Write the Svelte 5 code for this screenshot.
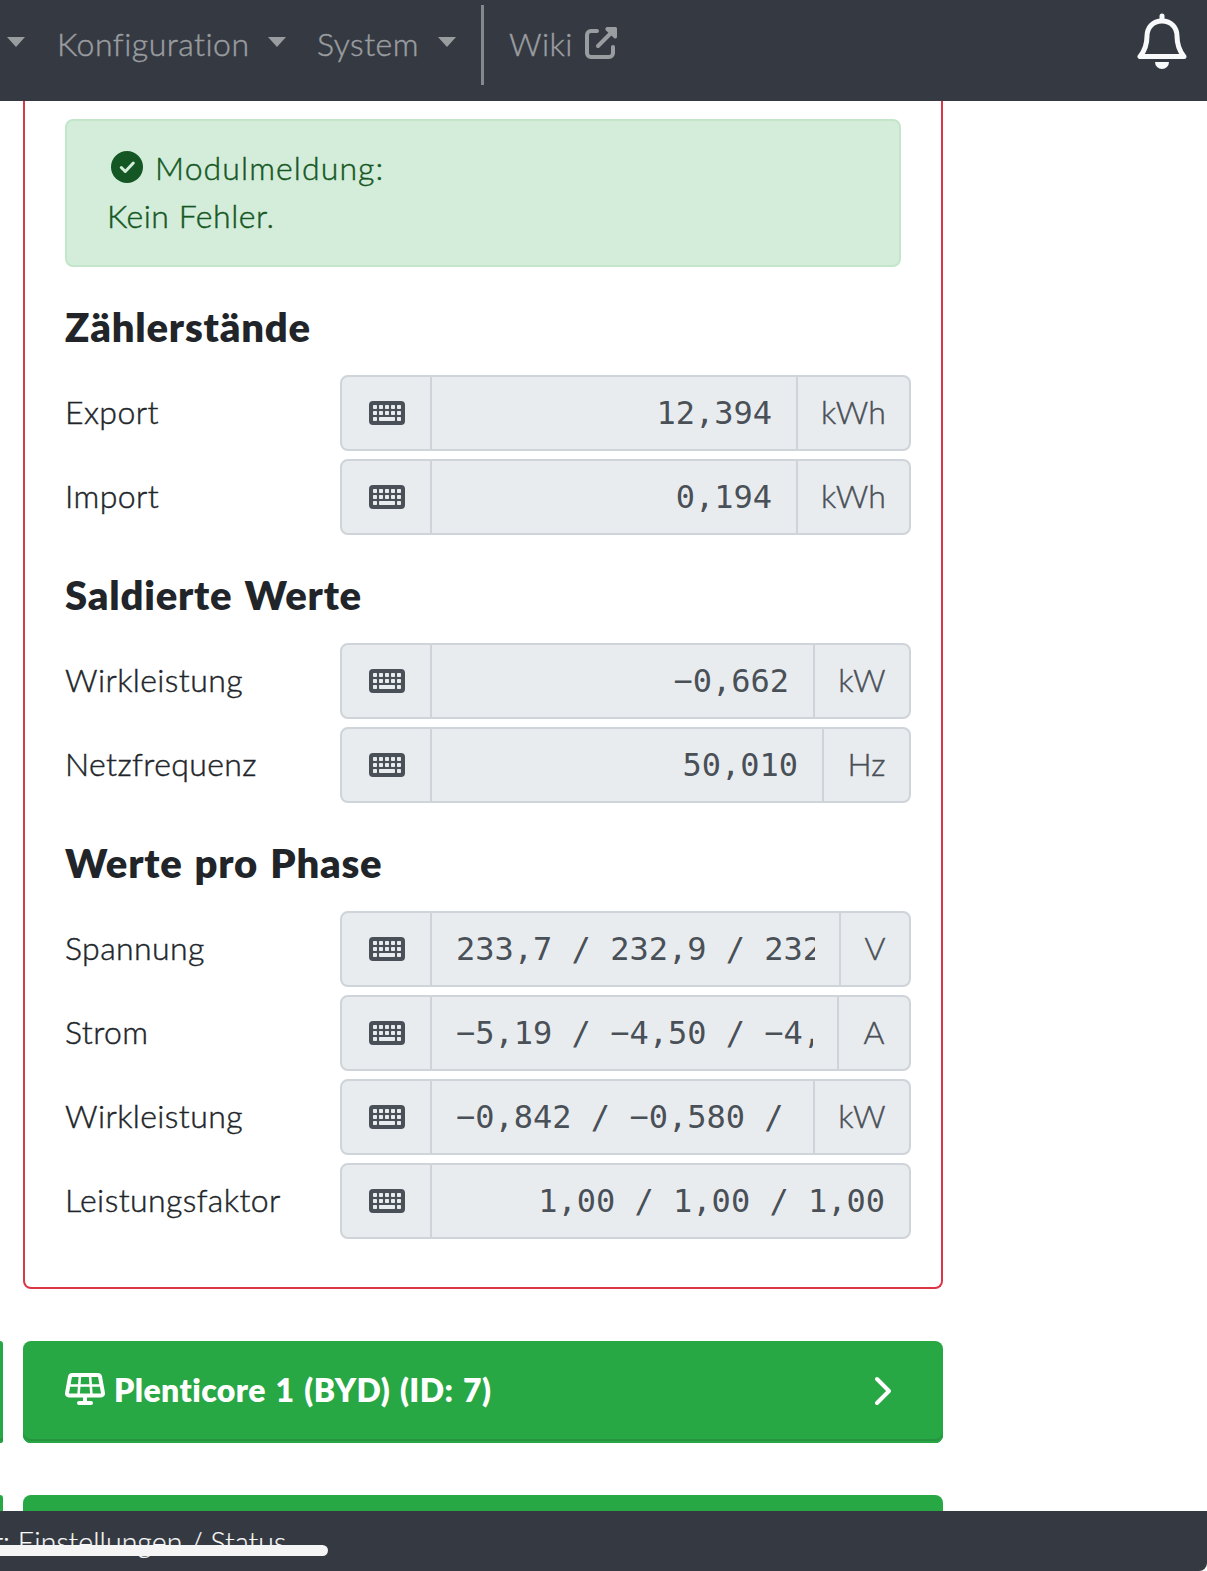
<script lang="ts">
	type Row = { label: string; value: string; unit?: string; clipped?: boolean };
	type Section = { title: string; rows: Row[] };

	const sections: Section[] = [
		{
			title: 'Zählerstände',
			rows: [
				{ label: 'Export', value: '12,394', unit: 'kWh' },
				{ label: 'Import', value: '0,194', unit: 'kWh' }
			]
		},
		{
			title: 'Saldierte Werte',
			rows: [
				{ label: 'Wirkleistung', value: '−0,662', unit: 'kW' },
				{ label: 'Netzfrequenz', value: '50,010', unit: 'Hz' }
			]
		},
		{
			title: 'Werte pro Phase',
			rows: [
				{ label: 'Spannung', value: '233,7 / 232,9 / 232', unit: 'V', clipped: true },
				{ label: 'Strom', value: '−5,19 / −4,50 / −4,', unit: 'A', clipped: true },
				{ label: 'Wirkleistung', value: '−0,842 / −0,580 /', unit: 'kW', clipped: true },
				{ label: 'Leistungsfaktor', value: '1,00 / 1,00 / 1,00' }
			]
		}
	];
</script>

{#snippet keyboard()}
	<svg class="keyboard" viewBox="0 0 36 24">
		<rect width="36" height="24" rx="4" fill="#495057" />
		<g fill="#e9ecef">
			{#each [6, 12, 18, 24, 30] as cx}
				<rect x={cx - 2} y="4" width="4" height="4" rx="0.8" />
				<rect x={cx - 2} y="10" width="4" height="4" rx="0.8" />
			{/each}
			<rect x="4" y="16" width="4" height="4" rx="0.8" />
			<rect x="10" y="16" width="16" height="4" rx="0.8" />
			<rect x="28" y="16" width="4" height="4" rx="0.8" />
		</g>
	</svg>
{/snippet}

<div class="page">
	<nav>
		<span class="caret first"></span>
		<span class="link konfig">Konfiguration</span>
		<span class="caret"></span>
		<span class="link system">System</span>
		<span class="caret"></span>
		<span class="divider"></span>
		<span class="link wiki">Wiki</span>
		<svg class="external" viewBox="0 0 32 32">
			<path d="M12 4H6a4 4 0 0 0-4 4v18a4 4 0 0 0 4 4h18a4 4 0 0 0 4-4v-6" />
			<path d="M13 19 26 6" />
			<path class="head" d="M22 0h8.500a1.500 1.500 0 0 1 1.500 1.500V10q-.8 2.500-3 1L20.800 3.200Q19.500 1 22 0z" />
		</svg>
		<svg class="bell" viewBox="0 0 50 56">
			<path d="M25 8C15.500 8 10 15 10 23c0 9-2 14.500-7 20.500h44C42 37.500 40 32 40 23 40 15 34.500 8 25 8z" />
			<path d="M25 3v4" />
			<path class="clapper" d="M18 49h14a7 7 0 0 1-14 0z" />
		</svg>
	</nav>

	<main>
		<div class="neighbours">
			<div class="card-header stub"></div>
			<div class="card-header stub"></div>
		</div>
		<div class="column">
			<section class="card">
				<div class="alert">
					<div class="alert-title">
						<svg viewBox="0 0 32 32">
							<circle cx="16" cy="16" r="16" />
							<path d="M10.300 16.500l4 4 8-8.500" />
						</svg>
						<span>Modulmeldung:</span>
					</div>
					<div class="message">Kein Fehler.</div>
				</div>

				{#each sections as section}
					<h2>{section.title}</h2>
					{#each section.rows as row}
						<div class="row">
							<span class="label">{row.label}</span>
							<div class="group">
								<span class="addon icon">{@render keyboard()}</span>
								<span class="field" class:clipped={row.clipped}>
									<span class="value">{row.value}</span>
								</span>
								{#if row.unit}
									<span class="addon unit {row.unit}">{row.unit}</span>
								{/if}
							</div>
						</div>
					{/each}
				{/each}
			</section>

			<div class="card-header">
				<svg class="solar" viewBox="0 0 40 32">
					<path d="M7 2h26q1.500 0 2 1.600l3 16.400q.2 2.500-2 2.500H4q-2.200 0-2-2.500L5 3.600Q5.500 2 7 2z" />
					<path class="thin" d="M4 12.500h32M15 2l-1.500 20.500M25 2l1.500 20.500" />
					<path d="M20 23v7M14 30h12" />
				</svg>
				<span class="device">Plenticore 1 (BYD) (ID: 7)</span>
				<svg class="chevron" viewBox="0 0 18 30">
					<path d="M3 3l12 12L3 27" />
				</svg>
			</div>
			<div class="card-header"></div>
		</div>
	</main>

	<footer>
		<span class="crumb">r: Einstellungen / Status</span>
		<span class="scrollbar"></span>
	</footer>
</div>

<style>
	:global(body) {
		margin: 0;
		background: #fff;
	}

	.page {
		display: flex;
		flex-direction: column;
		width: 1207px;
		height: 1571px;
		overflow: hidden;
		box-sizing: border-box;
		font-family: Lato, 'Open Sans', sans-serif;
		font-size: 32px;
		font-weight: 300;
		line-height: 48px;
		letter-spacing: 0.5px;
		color: #212529;
		/* Light weight is a touch too thin on its own */
		-webkit-text-stroke: 0.45px currentColor;
	}

	.page * {
		box-sizing: border-box;
	}

	svg {
		display: block;
		flex: none;
		fill: none;
		stroke-linecap: round;
		stroke-linejoin: round;
	}

	/* Top bar */
	nav {
		display: flex;
		flex: none;
		align-items: flex-start;
		height: 101px;
		padding-left: 7px;
		background: #353941;
		color: #9a9da0;
	}

	.link {
		flex: none;
		padding-top: 20px;
		white-space: nowrap;
	}

	.konfig {
		width: 193px;
		margin-left: 32px;
	}

	.system {
		width: 103px;
		margin-left: 31px;
	}

	.wiki {
		width: 62px;
		margin-left: 25px;
	}

	.caret {
		flex: none;
		margin: 37px 0 0 18px;
		border: 9px solid transparent;
		border-top: 10px solid currentColor;
		border-bottom: 0;
	}

	.caret.first {
		margin-left: 0;
	}

	.divider {
		flex: none;
		width: 3px;
		height: 80px;
		margin: 5px 0 0 25px;
		background: #85888c;
	}

	.external {
		width: 32px;
		height: 32px;
		margin: 27px 0 0 14px;
		stroke: currentColor;
		stroke-width: 4;
	}

	.external .head {
		fill: currentColor;
		stroke: none;
	}

	.bell {
		width: 50px;
		height: 56px;
		margin: 13px 20px 0 auto;
		stroke: #f8f9fa;
		stroke-width: 5;
	}

	.bell .clapper {
		fill: #f8f9fa;
		stroke: none;
	}

	/* Content */
	main {
		display: flex;
		flex: 1;
		gap: 20px;
		min-height: 0;
		overflow: hidden;
	}

	.neighbours {
		display: flex;
		flex: none;
		flex-direction: column;
		gap: 52px;
		width: 3px;
		padding-top: 1240px;
	}

	.column {
		display: flex;
		flex: none;
		flex-direction: column;
		gap: 52px;
		width: 920px;
	}

	.card {
		display: flex;
		flex: none;
		flex-direction: column;
		gap: 8px;
		height: 1188px;
		padding: 18px 30px 0 40px;
		border: 2px solid #dc3545;
		border-top: 0;
		border-radius: 0 0 8px 8px;
	}

	.alert {
		width: 836px;
		height: 148px;
		padding: 23px 40px;
		border: 2px solid #c3e6cb;
		border-radius: 8px;
		background: #d4edda;
		color: #155724;
	}

	.alert-title {
		display: flex;
		gap: 12px;
		padding-left: 4px;
		letter-spacing: 1.1px;
	}

	.alert-title svg {
		width: 32px;
		height: 32px;
		margin-top: 7px;
	}

	.alert-title circle {
		fill: #155724;
	}

	.alert-title path {
		stroke: #d4edda;
		stroke-width: 3;
	}

	h2 {
		height: 48px;
		margin: 28px 0 16px;
		font-size: 40px;
		font-weight: 800;
		line-height: 48px;
		letter-spacing: 0.8px;
		word-spacing: 2px;
		-webkit-text-stroke: 0;
	}

	.row {
		display: flex;
		flex: none;
		align-items: center;
		height: 76px;
	}

	.label {
		width: 275px;
		padding-bottom: 3px;
		letter-spacing: 0.4px;
		white-space: nowrap;
	}

	.group {
		display: flex;
		width: 571px;
		height: 76px;
		overflow: hidden;
		border: 2px solid #ced4da;
		border-radius: 8px;
		background: #e9ecef;
		color: #495057;
	}

	.addon {
		display: flex;
		flex: none;
		align-items: center;
		justify-content: center;
	}

	.icon {
		width: 90px;
		border-right: 2px solid #ced4da;
	}

	.keyboard {
		width: 36px;
		height: 24px;
		margin-left: 1px;
	}

	.field {
		display: flex;
		flex: 1;
		justify-content: flex-end;
		min-width: 0;
		padding: 12px 24px;
		font-family: 'DejaVu Sans Mono', monospace;
		font-weight: 400;
		letter-spacing: 0;
		-webkit-text-stroke: 0;
	}

	.field.clipped {
		justify-content: flex-start;
	}

	.value {
		overflow: hidden;
		white-space: pre;
	}

	.unit {
		padding-bottom: 3px;
		border-left: 2px solid #ced4da;
		letter-spacing: 0;
	}

	.kWh {
		width: 113px;
	}

	.kW {
		width: 96px;
	}

	.Hz {
		width: 87px;
	}

	.V {
		width: 70px;
	}

	.A {
		width: 72px;
	}

	.card-header {
		display: flex;
		flex: none;
		align-items: center;
		height: 102px;
		padding: 0 51px 4px 42px;
		border-radius: 8px;
		background: #28a745;
		box-shadow: inset 0 -2px #28a745, inset 0 -4px #26943f;
		color: #fff;
	}

	.stub {
		padding: 0;
		border-radius: 0 8px 8px 0;
	}

	.solar {
		width: 40px;
		height: 32px;
		margin-top: -2px;
		stroke: #fff;
		stroke-width: 4;
	}

	.solar .thin {
		stroke-width: 2.600;
	}

	.device {
		margin-left: 9px;
		font-weight: 800;
		letter-spacing: 0.4px;
		word-spacing: 2px;
		white-space: nowrap;
		-webkit-text-stroke: 0;
	}

	.chevron {
		width: 18px;
		height: 30px;
		margin: 2px 0 0 auto;
		stroke: #fff;
		stroke-width: 4;
	}

	/* Bottom bar */
	footer {
		position: relative;
		flex: none;
		height: 60px;
		overflow: hidden;
		border-bottom-right-radius: 8px;
		background: #353941;
		color: #f8f9fa;
	}

	.crumb {
		display: block;
		margin: 7px 0 0 -7px;
		font-size: 28.5px;
		letter-spacing: 0.05px;
		white-space: nowrap;
		-webkit-text-stroke: 0.2px currentColor;
	}

	/* Overlay scrollbar thumb lies over the breadcrumb */
	.scrollbar {
		position: absolute;
		left: -10px;
		top: 34px;
		width: 338px;
		height: 11px;
		border-radius: 6px;
		background: #f5f5f5;
	}
</style>
